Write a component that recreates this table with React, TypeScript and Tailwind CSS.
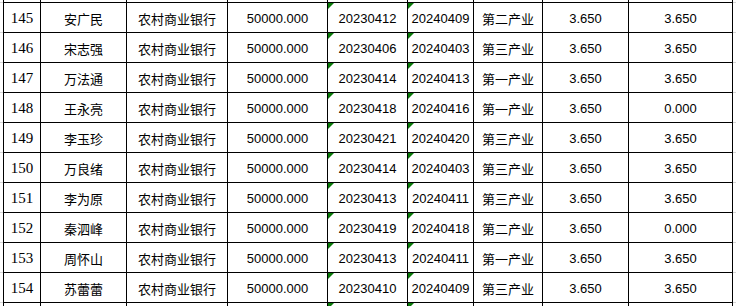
import React from "react";

const rows: string[][] = [
  ["145", "安广民", "20230412", "20240409", "第二产业", "3.650", "3.650"],
  ["146", "宋志强", "20230406", "20240403", "第三产业", "3.650", "3.650"],
  ["147", "万法通", "20230414", "20240413", "第一产业", "3.650", "3.650"],
  ["148", "王永亮", "20230418", "20240416", "第一产业", "3.650", "0.000"],
  ["149", "李玉珍", "20230421", "20240420", "第三产业", "3.650", "3.650"],
  ["150", "万良绪", "20230414", "20240403", "第三产业", "3.650", "3.650"],
  ["151", "李为原", "20230413", "20240411", "第三产业", "3.650", "3.650"],
  ["152", "秦泗峰", "20230419", "20240418", "第二产业", "3.650", "0.000"],
  ["153", "周怀山", "20230413", "20240411", "第一产业", "3.650", "3.650"],
  ["154", "苏蕾蕾", "20230410", "20240409", "第三产业", "3.650", "3.650"],
];

const serif = { fontFamily: '"Liberation Serif", "Noto Sans CJK SC", serif' };

function Tri() {
  return (
    <svg className="absolute left-0 top-0" width="6" height="6" viewBox="0 0 6 6">
      <polygon points="0,0 6,0 0,6" fill="#0a7a0a" />
    </svg>
  );
}

function Row({ r, h, empty }: { r?: string[]; h: string; empty?: boolean }) {
  const cell = "relative flex items-center justify-center border-r border-b border-black pt-[2px] whitespace-nowrap";
  return (
    <div className={`flex ${h}`}>
      <div className="w-[3px] border-b border-[#d4d4d4]" />
      <div className={`${cell} w-[38px] border-l font-['Liberation_Serif'] text-[15px]`}>{!empty && r?.[0]}</div>
      <div className={`${cell} w-[86px] font-['Noto_Sans_CJK_SC'] text-[13px]`}>{!empty && r?.[1]}</div>
      <div className={`${cell} w-[101px] font-['Noto_Sans_CJK_SC'] text-[13px]`}>{!empty && "农村商业银行"}</div>
      <div className={`${cell} w-[100px] font-['Liberation_Sans'] text-[13px]`}>{!empty && "50000.000"}</div>
      <div className={`${cell} w-[80px] font-['Liberation_Sans'] text-[13px]`}>
        {!empty && <Tri />}
        {!empty && r?.[2]}
      </div>
      <div className={`${cell} w-[66px] font-['Liberation_Sans'] text-[13px]`}>
        {!empty && <Tri />}
        {!empty && r?.[3]}
      </div>
      <div className={`${cell} w-[69px] font-['Noto_Sans_CJK_SC'] text-[13px]`}>{!empty && r?.[4]}</div>
      <div className={`${cell} w-[86px] font-['Liberation_Sans'] text-[13px]`}>{!empty && r?.[5]}</div>
      <div className={`${cell} w-[104px] font-['Liberation_Sans'] text-[13px]`}>{!empty && r?.[6]}</div>
      <div className="w-[3px] border-b border-[#d4d4d4]" />
    </div>
  );
}

export default function App() {
  return (
    <div className="w-[736px] h-[306px] overflow-hidden bg-white text-black" style={serif}>
      <div className="flex h-[3px]">
        <div className="w-[3px] border-b border-[#d4d4d4]" />
        <div className="w-[38px] border-l border-r border-b border-black" />
        <div className="w-[86px] border-r border-b border-black" />
        <div className="w-[101px] border-r border-b border-black" />
        <div className="w-[100px] border-r border-b border-black" />
        <div className="w-[80px] border-r border-b border-black" />
        <div className="w-[66px] border-r border-b border-black" />
        <div className="w-[69px] border-r border-b border-black" />
        <div className="w-[86px] border-r border-b border-black" />
        <div className="w-[104px] border-r border-b border-black" />
        <div className="w-[3px] border-b border-[#d4d4d4]" />
      </div>
      {rows.map((r) => (
        <Row key={r[0]} r={r} h="h-[30px]" />
      ))}
      <div className="flex h-[10px]">
        <div className="w-[3px]" />
        <div className="w-[38px] border-l border-r border-black" />
        <div className="w-[86px] border-r border-black" />
        <div className="w-[101px] border-r border-black" />
        <div className="w-[100px] border-r border-black" />
        <div className="w-[80px] border-r border-black relative"><Tri /></div>
        <div className="w-[66px] border-r border-black relative"><Tri /></div>
        <div className="w-[69px] border-r border-black" />
        <div className="w-[86px] border-r border-black" />
        <div className="w-[104px] border-r border-black" />
        <div className="w-[3px]" />
      </div>
    </div>
  );
}
